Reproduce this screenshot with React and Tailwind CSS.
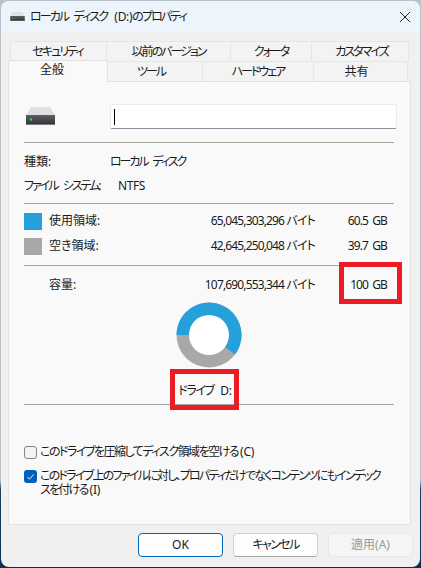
const font = { fontFamily: '"Noto Sans", "Noto Sans CJK JP", sans-serif' };

function DriveIcon({ className }) {
  return (
    <svg viewBox="0 0 29 18" className={className}>
      <defs>
        <linearGradient id="front" x1="0" y1="0" x2="0" y2="1">
          <stop offset="0" stopColor="#5d5f60" />
          <stop offset="1" stopColor="#303233" />
        </linearGradient>
      </defs>
      <path d="M5 0H24L29 8H0Z" fill="#dfe0e4" />
      <rect x="0" y="8" width="29" height="10" fill="url(#front)" />
      <rect x="0" y="17.2" width="29" height="0.8" fill="#8b8d8e" />
      <circle cx="5" cy="12.5" r="1.2" fill="#3fe04a" />
    </svg>
  );
}

function Latin({ children }) {
  return <span className="tracking-[-0.3px] pl-[2px]">{children}</span>;
}

function Tab({ w, active, className = '', children }) {
  if (active) {
    return (
      <div className={`${w} h-[22px] -mt-[1px] bg-[#f9f9f9] border border-b-0 border-[#e2e2e2] rounded-t-[3px] flex items-center justify-center pb-[3px] pr-[12px] z-10 relative`}>
        {children}
      </div>
    );
  }
  return (
    <div className={`${w} h-[20px] bg-[#f3f3f3] border border-b-0 border-l-0 first:border-l border-[#e5e5e5] flex items-center justify-center tracking-[-2px] ${className}`}>
      {children}
    </div>
  );
}

function Rule({ className }) {
  return <div className={`h-px bg-[#a5a5a5] w-[370px] ${className}`} />;
}

function SizeRow({ swatch, label, bytes, gb, className }) {
  return (
    <div className={`flex items-center h-[18px] w-[370px] ${className}`}>
      {swatch ? <div className={`w-[18px] h-[17px] ${swatch}`} /> : <div className="w-[18px]" />}
      <div className="ml-[7px] flex-1">{label}</div>
      <div className="w-[180px] text-right tracking-[-0.85px]">{bytes}</div>
      <div className="w-[72px] text-right pr-[7px] box-content tracking-[-0.9px] [word-spacing:2px]">{gb}</div>
    </div>
  );
}

function Button({ className, children }) {
  return (
    <div className={`w-[85px] h-[24px] rounded-[4px] flex items-center justify-center ${className}`}>
      {children}
    </div>
  );
}

export default function App() {
  return (
    <div
      style={font}
      className="relative w-[421px] h-[568px] overflow-hidden p-[1px] text-[12px] leading-none text-[#1a1a1a] [font-feature-settings:'palt'] bg-[linear-gradient(180deg,#b9c2cb_0,#b9c2cb_480px,#17405f_490px,#0e3050_100%)]"
    >
      <div className="w-[419px] h-[566px] rounded-[8px] overflow-hidden bg-[#f0f0f0] flex flex-col">
        {/* Title bar */}
        <div className="h-[31px] shrink-0 bg-[#eef4fb] flex items-center pl-[9px] pr-[10px]">
          <DriveIcon className="w-[15px] h-[9px]" />
          <span className="ml-[5px] tracking-[-1.9px] [word-spacing:4px]">ローカル ディスク <Latin>(D:)</Latin>のプロパティ</span>
          <svg viewBox="0 0 10 10" className="w-[10px] h-[10px] ml-auto" fill="none" stroke="#222" strokeWidth="1">
            <path d="M0 0L10 10M10 0L0 10" />
          </svg>
        </div>

        {/* Tabs */}
        <div className="pt-[9px] shrink-0">
          <div className="flex pl-[9px]">
            <Tab w="w-[97px]" className="pr-[2px]">セキュリティ</Tab>
            <Tab w="w-[124px]">以前のバージョン</Tab>
            <Tab w="w-[81px]">クォータ</Tab>
            <Tab w="w-[97px]" className="pl-[3px]">カスタマイズ</Tab>
          </div>
          <div className="flex pl-[7px] h-[20px]">
            <Tab w="w-[100px]" active>全般</Tab>
            <Tab w="w-[95px]" className="pr-[8px]">ツール</Tab>
            <Tab w="w-[111px]">ハードウェア</Tab>
            <Tab w="w-[94px]" className="pr-[8px] tracking-normal">共有</Tab>
          </div>
        </div>

        {/* General panel */}
        <div className="mx-[7px] w-[403px] h-[444px] shrink-0 bg-[#f9f9f9] border border-[#e2e2e2] pl-[15px] flex flex-col">
          <div className="flex items-start mt-[22px]">
            <DriveIcon className="ml-[2px] mt-[3px] w-[29px] h-[18px]" />
            <div className="ml-[55px] w-[287px] h-[25px] bg-white border border-[#ececec] border-b-[#8a94a0] rounded-[2px] flex items-center pl-[3px]">
              <div className="w-px h-[16px] bg-black" />
            </div>
          </div>
          <Rule className="mt-[13px]" />
          <div className="flex items-center h-[14px] mt-[12px]">
            <div className="w-[86px]">種類:</div>
            <div className="tracking-[-2.1px] [word-spacing:4px]">ローカル ディスク</div>
          </div>
          <div className="flex items-center h-[14px] mt-[10px]">
            <div className="w-[94px] tracking-[-2px] [word-spacing:4px]">ファイル システム:</div>
            <div className="tracking-[-0.4px]">NTFS</div>
          </div>
          <Rule className="mt-[10px]" />
          <SizeRow className="mt-[8px]" swatch="bg-[#26a0da]" label="使用領域:" bytes="65,045,303,296 バイト" gb="60.5 GB" />
          <SizeRow className="mt-[7px]" swatch="bg-[#a8a8a8]" label="空き領域:" bytes="42,645,250,048 バイト" gb="39.7 GB" />
          <Rule className="mt-[10px]" />
          <SizeRow className="mt-[10px]" label="容量:" bytes="107,690,553,344 バイト" gb="100 GB" />

          {/* Usage donut */}
          <div className="w-[370px] flex justify-center mt-[8px]">
            <svg viewBox="0 0 66 66" className="w-[66px] h-[66px] -ml-[1px]">
              <circle cx="33" cy="33" r="32.5" fill="#a8a8a8" />
              <path d="M33 33L0.5 33A32.5 32.5 0 1 1 59 52.6Z" fill="#26a0da" />
              <circle cx="33" cy="33" r="20" fill="#fff" />
            </svg>
          </div>
          <div className="w-[362px] text-center mt-[17px] h-[14px] tracking-[-1.4px] [word-spacing:3px]">ドライブ <Latin>D:</Latin></div>
          <Rule className="mt-[5px]" />

          {/* Options */}
          <div className="flex items-center mt-[40px] h-[14px]">
            <div className="w-[13px] h-[13px] rounded-[3px] border border-[#858585] bg-[#f4f4f4] shrink-0" />
            <div className="ml-[3px] tracking-[-1.5px]">このドライブを圧縮してディスク領域を空ける<Latin>(C)</Latin></div>
          </div>
          <div className="flex items-start mt-[10px]">
            <div className="w-[13px] h-[13px] mt-px rounded-[3px] bg-[#005fb8] shrink-0 flex items-center justify-center">
              <svg viewBox="0 0 10 10" className="w-[9px] h-[9px]" fill="none" stroke="#fff" strokeWidth="1">
                <path d="M1.5 5.5L4 8L8.5 2.5" />
              </svg>
            </div>
            <div className="ml-[3px] w-[345px] leading-[14px] tracking-[-1.75px]">このドライブ上のファイルに対し、プロパティだけでなくコンテンツにもインデックスを付ける<Latin>(I)</Latin></div>
          </div>
        </div>

        {/* Footer buttons */}
        <div className="flex justify-end gap-[10px] pt-[8px] pr-[7px]">
          <Button className="bg-[#fdfdfd] border border-[#0067c0]">OK</Button>
          <Button className="bg-[#fdfdfd] border border-[#d0d0d0] border-b-[#a8a8a8] tracking-[-1.6px]">キャンセル</Button>
          <Button className="bg-[#f5f5f5] border border-[#e8e8e8] text-[#9a9a9a]">適用(A)</Button>
        </div>
      </div>

      {/* Red annotation boxes */}
      <div className="absolute left-[339px] top-[262px] w-[63px] h-[42px] border-[5px] border-[#ed1c24]" />
      <div className="absolute left-[170px] top-[369px] w-[69px] h-[41px] border-[5px] border-[#ed1c24]" />
    </div>
  );
}
